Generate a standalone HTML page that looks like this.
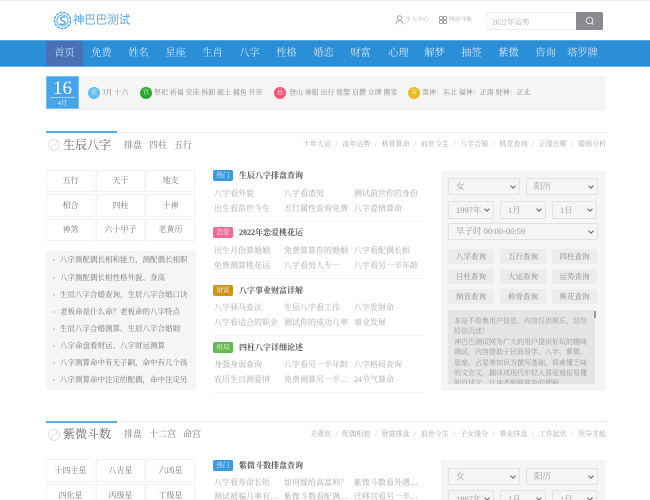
<!DOCTYPE html>
<html lang="zh"><head><meta charset="utf-8"><title>神巴巴测试</title>
<style>
*{box-sizing:border-box;margin:0;padding:0}
html{width:650px;height:500px;overflow:hidden;background:#fff}
body{position:relative;width:650px;height:500px;overflow:hidden;background:#fff;filter:blur(.3px);font-family:"Liberation Serif","Noto Serif CJK SC",serif;color:#888}
.t{position:absolute;white-space:nowrap;line-height:1;transform:translateY(-50%)}
.nav{position:absolute;left:0;top:40px;width:650px;height:27px;background:#2b8fd8;border-top:1px solid #58a8e4;border-bottom:1px solid #6ab2ea}
.nav b{position:absolute;top:0;width:37px;height:25px;line-height:25px;text-align:center;font-weight:400;font-size:10.2px;color:#d4e8f7;white-space:nowrap}
.c{position:absolute;width:12px;height:12px;border-radius:50%;top:87px;color:#fff;opacity:.9;font-size:6px;line-height:12px;text-align:center}
.y{font-size:7px;color:#8a8a8a;top:93px}
.date{position:absolute;left:46px;top:76px;width:33px;height:33px;background:#45a4ea;border:1px solid #7cc0f0;color:#fff;text-align:center}
.date .n{position:absolute;left:0;top:3px;width:31px;font-size:19px;line-height:18px;color:#fff}
.date .r{position:absolute;left:3px;top:20px;width:25px;height:1px;background:#a8d4f5}
.date .m{position:absolute;left:0;top:22px;width:31px;font-size:6.5px;line-height:9px;color:#eaf5fd}
.cell{position:absolute;border:1px solid #f2f2f2;text-align:center;font-size:8px;color:#777;white-space:nowrap}
.li{position:absolute;left:60px;width:128px;overflow:hidden;font-size:7.5px;color:#777;white-space:nowrap;line-height:10px}
.dot{position:absolute;left:53px;width:2px;height:2px;background:#ccc;border-radius:50%}
.tag{position:absolute;left:213px;width:20px;height:11px;border-radius:2px;color:#f2f2f2;font-size:6.5px;line-height:11px;text-align:center}
.h{position:absolute;left:239px;font-size:8px;font-weight:700;color:#555;line-height:11px;white-space:nowrap}
.l{position:absolute;font-size:8px;color:#aaa;line-height:10px;white-space:nowrap}
.hr{position:absolute;left:213px;width:212px;height:1px;background:#f4f4f4}
.panel{position:absolute;left:441px;width:165px;background:#f5f5f5}
.s{position:absolute;background:#f5f5f5;border:1px solid #e2e2e2;border-radius:1px;font-size:8.5px;color:#999;white-space:nowrap;padding-left:7px}
.s:after{content:"";position:absolute;right:4px;top:50%;margin-top:-3px;width:3px;height:3px;border-right:1px solid #666;border-bottom:1px solid #666;transform:rotate(45deg)}
.btn{position:absolute;height:15px;background:#ececec;color:#888;font-size:7.5px;line-height:15px;text-align:center;white-space:nowrap}
.links{position:absolute;right:44px;font-size:7px;color:#aaa;white-space:nowrap;line-height:8px;display:flex}
.links i{font-style:normal;color:#bbb;width:11.3px;text-align:center;display:inline-block}
.sub{position:absolute;font-size:9px;color:#777;line-height:10px;white-space:nowrap}
.title{position:absolute;left:63px;font-size:12px;color:#666;line-height:14px;white-space:nowrap}
.line{position:absolute;left:46px;width:560px;height:1px;background:#eee}
.bl{position:absolute;left:46px;width:71px;height:2px;background:#55aeee}
</style></head>
<body>
<div style="position:absolute;left:0;top:0;width:650px;height:1px;background:#eee"></div>

<!-- logo -->
<svg style="position:absolute;left:53px;top:11px" width="19" height="19" viewBox="0 0 19 19" fill="none" stroke="#52a5e6">
<circle cx="9.5" cy="9.5" r="8" stroke-width="1.4" stroke-dasharray="3 .8"/>
<circle cx="9.5" cy="9.5" r="5.6" stroke-width=".9"/>
<path d="M12 6.5C9.5 5 7 6.5 8 8.5c.8 1.5 4 1.3 4 3.2 0 1.8-2.800 2.300-5 1" stroke-width="1.4"/>
</svg>
<div class="t" style="left:73px;top:20.5px;font-family:'Liberation Sans','Noto Sans CJK SC',sans-serif;font-size:11.4px;color:#55a6e6">神巴巴测试</div>

<!-- user links -->
<svg style="position:absolute;left:395px;top:15px" width="9" height="10" viewBox="0 0 9 10" fill="none" stroke="#999" stroke-width=".8">
<circle cx="4.5" cy="3" r="2.3"/><path d="M.8 9.3C1.2 6.800 2.600 5.600 4.500 5.600s3.300 1.200 3.700 3.700"/></svg>
<div class="t" style="left:405.5px;top:21px;font-size:5.8px;color:#aaa">个人中心</div>
<svg style="position:absolute;left:439px;top:16px" width="8" height="8" viewBox="0 0 8 8" fill="none" stroke="#888" stroke-width=".8">
<rect x=".5" y=".5" width="3" height="3" rx=".6"/><rect x="4.5" y=".5" width="3" height="3" rx=".6"/><rect x=".5" y="4.5" width="3" height="3" rx=".6"/><rect x="4.5" y="4.5" width="3" height="3" rx=".6"/></svg>
<div class="t" style="left:449px;top:21px;font-size:5.8px;color:#aaa">网站导航</div>

<!-- search -->
<div style="position:absolute;left:486px;top:12px;width:91px;height:18px;border:1px solid #eee;border-radius:2px 0 0 2px;background:#fff"></div>
<div class="t" style="left:492px;top:21.5px;font-size:7.5px;color:#aaa">2022年运势</div>
<div style="position:absolute;left:576px;top:12px;width:27px;height:18px;background:#8c8a90;border-radius:0 2px 2px 0"></div>
<svg style="position:absolute;left:585px;top:16px" width="10" height="10" viewBox="0 0 10 10" fill="none" stroke="#eee" stroke-width=".9"><circle cx="4.5" cy="4.5" r="3.3"/><path d="M7 7l1.700 1.700"/></svg>

<!-- nav -->
<div class="nav">
<b style="left:46px;background:#4a70b6">首页</b><b style="left:83px">免费</b><b style="left:120px">姓名</b><b style="left:157px">星座</b><b style="left:194px">生肖</b><b style="left:231px">八字</b><b style="left:268px">性格</b><b style="left:305px">婚恋</b><b style="left:342px">财富</b><b style="left:380px">心理</b><b style="left:416px">解梦</b><b style="left:453px">抽签</b><b style="left:490px">紫微</b><b style="left:527px">咨询</b><b style="left:564px">塔罗牌</b>
</div>

<!-- almanac -->
<div style="position:absolute;left:46px;top:76px;width:560px;height:35px;background:#f5f5f5"></div>
<div class="date"><div class="n">16</div><div class="r"></div><div class="m">4月</div></div>
<div class="c" style="left:88px;background:#4db8f5">农</div><div class="t y" style="left:102px">3月 十六</div>
<div class="c" style="left:140px;background:#14a014">宜</div><div class="t y" style="left:154px">祭祀 祈福 安床 拆卸 破土 捕鱼 开市</div>
<div class="c" style="left:274px;background:#f2456c">忌</div><div class="t y" style="left:289px">登山 乘船 出行 嫁娶 启攒 立碑 搬家</div>
<div class="c" style="left:408px;background:#e6b412">吉</div><div class="t y" style="left:422px">喜神：东北 福神：正南 财神：正北</div>

<!-- section 1 -->
<div class="line" style="top:132px"></div><div class="bl" style="top:131px"></div>
<svg style="position:absolute;left:48px;top:139px" width="12" height="12" viewBox="0 0 12 12" fill="none" stroke="#ddd" stroke-width=".8"><circle cx="6" cy="6" r="5.5"/><path d="M6 .5a2.700 2.700 0 0 1 0 5.500 2.700 2.700 0 0 0 0 5.500"/></svg>
<div class="title" style="top:138px">生辰八字</div>
<div class="sub" style="left:124px;top:140px">排盘</div><div class="sub" style="left:149px;top:140px">四柱</div><div class="sub" style="left:174px;top:140px">五行</div>
<div class="links" style="top:140px"><span>十年大运</span><i>/</i><span>流年运势</span><i>/</i><span>称骨算命</span><i>/</i><span>前世今生</span><i>/</i><span>八字合婚</span><i>/</i><span>桃花查询</span><i>/</i><span>正缘在哪</span><i>/</i><span>婚姻分析</span></div>

<div class="cell" style="left:46px;top:170px;width:49px;height:22px;line-height:20px">五行</div>
<div class="cell" style="left:96px;top:170px;width:49px;height:22px;line-height:20px">天干</div>
<div class="cell" style="left:146px;top:170px;width:49px;height:22px;line-height:20px">地支</div>
<div class="cell" style="left:46px;top:194px;width:49px;height:23px;line-height:21px">相合</div>
<div class="cell" style="left:96px;top:194px;width:49px;height:23px;line-height:21px">四柱</div>
<div class="cell" style="left:146px;top:194px;width:49px;height:23px;line-height:21px">十神</div>
<div class="cell" style="left:46px;top:219px;width:49px;height:22px;line-height:20px">神煞</div>
<div class="cell" style="left:96px;top:219px;width:49px;height:22px;line-height:20px">六十甲子</div>
<div class="cell" style="left:146px;top:219px;width:49px;height:22px;line-height:20px">老黄历</div>

<div style="position:absolute;left:46px;top:251px;width:150px;height:139px;background:#f5f5f5"></div>
<div class="dot" style="top:259px"></div><div class="li" style="top:255px">八字测配偶长相和能力，测配偶长相职业</div>
<div class="dot" style="top:277px"></div><div class="li" style="top:272.5px">八字测配偶长相性格外貌、身高</div>
<div class="dot" style="top:294px"></div><div class="li" style="top:289.5px">生辰八字合婚查询，生辰八字合婚口诀</div>
<div class="dot" style="top:311px"></div><div class="li" style="top:306.5px">老板命是什么命？老板命的八字特点</div>
<div class="dot" style="top:328px"></div><div class="li" style="top:323.5px">生辰八字合婚测算、生辰八字合婚姻</div>
<div class="dot" style="top:345px"></div><div class="li" style="top:340.5px">八字命盘看财运、八字财运测算</div>
<div class="dot" style="top:362px"></div><div class="li" style="top:357.5px">八字测算命中有无子嗣，命中有几个孩子</div>
<div class="dot" style="top:379px"></div><div class="li" style="top:374.5px">八字测算命中注定的配偶，命中注定另一半</div>

<div class="tag" style="top:170px;background:#3a9ae0">热门</div><div class="h" style="top:170px">生辰八字排盘查询</div>
<div class="l" style="left:214px;top:189px">八字看外貌</div><div class="l" style="left:284px;top:189px">八字看渣男</div><div class="l" style="left:354px;top:189px">测试前世你的身份</div>
<div class="l" style="left:214px;top:204px">出生看前世今生</div><div class="l" style="left:284px;top:204px">五行属性查询免费</div><div class="l" style="left:354px;top:204px">八字爱情算命</div>
<div class="hr" style="top:221px"></div>
<div class="tag" style="top:227px;background:#f26a90">恋爱</div><div class="h" style="top:227px">2022年恋爱桃花运</div>
<div class="l" style="left:214px;top:246px">出生月份算婚姻</div><div class="l" style="left:284px;top:246px">免费算算你的婚姻</div><div class="l" style="left:354px;top:246px">八字看配偶长相</div>
<div class="l" style="left:214px;top:261px">免费测算桃花运</div><div class="l" style="left:284px;top:261px">八字看男人专一</div><div class="l" style="left:354px;top:261px">八字看另一半年龄</div>
<div class="hr" style="top:278px"></div>
<div class="tag" style="top:284.5px;background:#cf9417">财富</div><div class="h" style="top:284.5px">八字事业财富详解</div>
<div class="l" style="left:214px;top:303px">八字驿马查法</div><div class="l" style="left:284px;top:303px">生辰八字看工作</div><div class="l" style="left:354px;top:303px">八字发财命</div>
<div class="l" style="left:214px;top:318px">八字看适合的职业</div><div class="l" style="left:284px;top:318px">测试你的成功几率</div><div class="l" style="left:354px;top:318px">事业发展</div>
<div class="hr" style="top:335px"></div>
<div class="tag" style="top:341.5px;background:#5fbe4e">格局</div><div class="h" style="top:341.5px">四柱八字详细论述</div>
<div class="l" style="left:214px;top:360px">身强身弱查询</div><div class="l" style="left:284px;top:360px">八字看另一半年龄</div><div class="l" style="left:354px;top:360px">八字格局查询</div>
<div class="l" style="left:214px;top:375px">农历生日测爱情</div><div class="l" style="left:284px;top:375px">免费测算另一半…</div><div class="l" style="left:354px;top:375px">24节气算命</div>
<div class="hr" style="top:392px"></div>

<div class="panel" style="top:171px;height:220px"></div>
<div class="s" style="left:448px;top:178px;width:72px;height:17px;line-height:15px">女</div>
<div class="s" style="left:526px;top:178px;width:72px;height:17px;line-height:15px">阳历</div>
<div class="s" style="left:448px;top:201px;width:46px;height:18px;line-height:16px">1997年</div>
<div class="s" style="left:500px;top:201px;width:46px;height:18px;line-height:16px">1月</div>
<div class="s" style="left:552px;top:201px;width:45px;height:18px;line-height:16px">1日</div>
<div class="s" style="left:448px;top:223px;width:150px;height:17px;line-height:15px">早子时 00:00-00:59</div>
<div class="btn" style="left:448px;top:249px;width:46px">八字查询</div><div class="btn" style="left:500px;top:249px;width:46px">五行查询</div><div class="btn" style="left:552px;top:249px;width:45px">四柱查询</div>
<div class="btn" style="left:448px;top:269px;width:46px">日柱查询</div><div class="btn" style="left:500px;top:269px;width:46px">大运查询</div><div class="btn" style="left:552px;top:269px;width:45px">运势查询</div>
<div class="btn" style="left:448px;top:289px;width:46px">纳音查询</div><div class="btn" style="left:500px;top:289px;width:46px">称骨查询</div><div class="btn" style="left:552px;top:289px;width:45px">桃花查询</div>
<div style="position:absolute;left:448px;top:310px;width:147px;height:74px;background:#e5e5e5;overflow:hidden;padding:6px 4px 0 6px;font-size:7px;line-height:10.4px;color:#999">本站不收集用户信息，内容仅供娱乐，切勿轻信沉迷！<br>神巴巴测试网为广大的用户提供好玩的趣味测试，内容借助于民间易学、八字、紫微、星座、占星等知识为撰写基础，将难懂乏味的文言文，翻译成现代年轻人喜爱通俗易懂的白话文，让读者能够简单的理解</div>
<div style="position:absolute;left:594px;top:311px;width:1.5px;height:7px;background:#999"></div>

<!-- section 2 -->
<div class="line" style="top:421px"></div><div class="bl" style="top:420.5px"></div>
<svg style="position:absolute;left:48px;top:428.5px" width="12" height="12" viewBox="0 0 12 12" fill="none" stroke="#ddd" stroke-width=".8"><circle cx="6" cy="6" r="5.5"/><path d="M6 .5a2.700 2.700 0 0 1 0 5.500 2.700 2.700 0 0 0 0 5.500"/></svg>
<div class="title" style="top:427px">紫微斗数</div>
<div class="sub" style="left:124px;top:429px">排盘</div><div class="sub" style="left:149px;top:429px">十二宫</div><div class="sub" style="left:183px;top:429px">命宫</div>
<div class="links" style="top:430px"><span>夫妻宫</span><i>/</i><span>配偶相貌</span><i>/</i><span>财富排盘</span><i>/</i><span>前世今生</span><i>/</i><span>子女缘分</span><i>/</i><span>事业排盘</span><i>/</i><span>工作起伏</span><i>/</i><span>领导才能</span></div>

<div class="cell" style="left:46px;top:459px;width:49px;height:23px;line-height:21px">十四主星</div>
<div class="cell" style="left:96px;top:459px;width:49px;height:23px;line-height:21px">八吉星</div>
<div class="cell" style="left:146px;top:459px;width:49px;height:23px;line-height:21px">六凶星</div>
<div class="cell" style="left:46px;top:484px;width:49px;height:23px;line-height:21px">四化星</div>
<div class="cell" style="left:96px;top:484px;width:49px;height:23px;line-height:21px">丙级星</div>
<div class="cell" style="left:146px;top:484px;width:49px;height:23px;line-height:21px">丁级星</div>

<div class="tag" style="top:460px;background:#3a9ae0">热门</div><div class="h" style="top:460px">紫微斗数排盘查询</div>
<div class="l" style="left:214px;top:478px">八字看寿命长短</div><div class="l" style="left:284px;top:478px">如何嫁给高富帅？</div><div class="l" style="left:354px;top:478px">紫微斗数看外遇…</div>
<div class="l" style="left:214px;top:492px">测试被骗几率有…</div><div class="l" style="left:284px;top:492px">紫微斗数看配偶…</div><div class="l" style="left:354px;top:492px">迁移宫看另一半…</div>

<div class="panel" style="top:460px;height:40px"></div>
<div class="s" style="left:448px;top:468px;width:72px;height:17px;line-height:15px">女</div>
<div class="s" style="left:526px;top:468px;width:72px;height:17px;line-height:15px">阳历</div>
<div class="s" style="left:448px;top:490px;width:46px;height:18px;line-height:16px">1997年</div>
<div class="s" style="left:500px;top:490px;width:46px;height:18px;line-height:16px">1月</div>
<div class="s" style="left:552px;top:490px;width:45px;height:18px;line-height:16px">1日</div>
</body></html>
